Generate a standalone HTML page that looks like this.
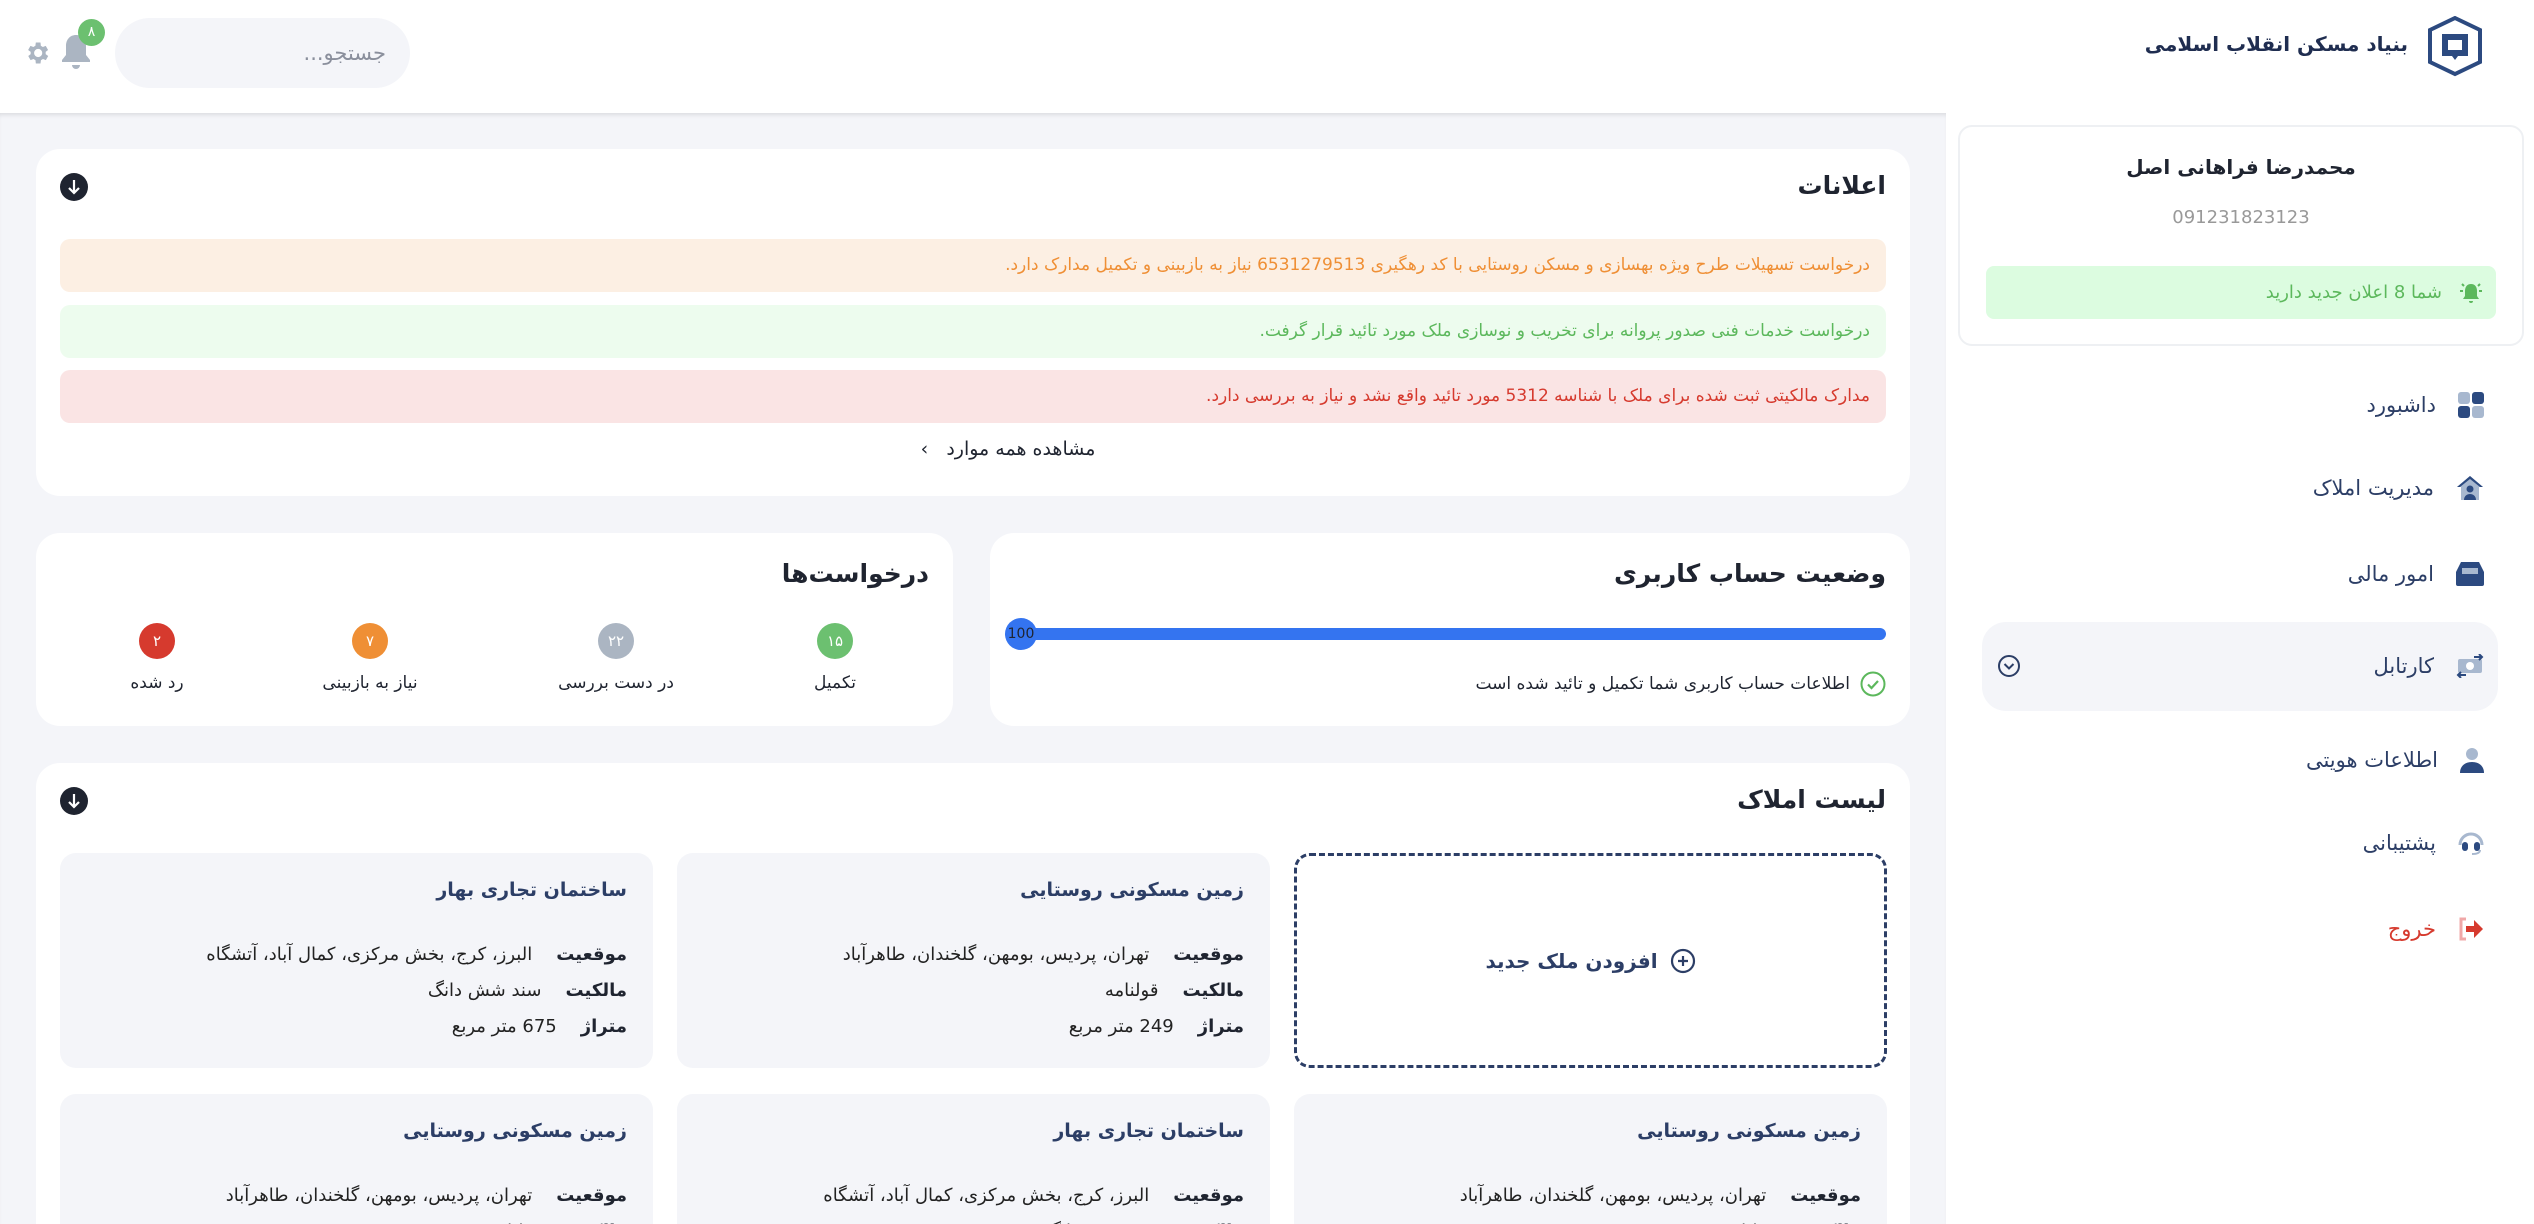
<!DOCTYPE html>
<html lang="fa" dir="rtl"><head><meta charset="utf-8">
<style>
*{box-sizing:border-box;margin:0;padding:0}
html,body{width:2534px;height:1224px;overflow:hidden}
body{background:#fff;font-family:"DejaVu Sans","Liberation Sans",sans-serif;color:#1f2430}
#wrap{position:relative;width:2534px;height:1224px;overflow:hidden}
.abs{position:absolute}
#main{left:0;top:113px;width:1946px;height:1111px;background:#f4f5f9;box-shadow:inset 0 4px 4px -2px rgba(0,0,0,.1)}
.card{position:absolute;background:#fff;border-radius:24px}
.h{position:absolute;right:24px;font-weight:bold;font-size:25px;color:#1f2430}
.alert{position:absolute;left:24px;right:24px;height:53px;border-radius:10px;font-size:17px;line-height:53px;padding-right:16px}
.menu{position:absolute;right:50px;width:480px;height:40px;display:flex;align-items:center;font-size:21px;color:#2c3e66}
.menu svg{margin-left:22px}
.pc{position:absolute;width:593px;height:215px;background:#f4f5f9;border-radius:16px;padding:26px 26px 0 0;overflow:hidden}
.pc .t{font-weight:bold;font-size:19px;color:#2c3e66;height:58px}
.row{display:flex;gap:24px;font-size:18px;line-height:36px;color:#222}
.row b{color:#1f2430}
.st{position:absolute;top:90px;width:200px;text-align:center;font-size:17px}
.st i{display:block;margin:0 auto 14px;width:36px;height:36px;border-radius:50%;color:#fff;font-style:normal;font-size:15px;line-height:36px}
</style></head><body><div id="wrap">
<div id="main" class="abs"></div>

<div class="abs" style="left:115px;top:18px;width:295px;height:70px;border-radius:35px;background:#f4f5f9;font-size:21px;color:#8a8f9c;line-height:70px;padding-right:24px">جستجو...</div>
<svg class="abs" style="left:60px;top:33px" width="32" height="38" viewBox="0 0 32 38"><path d="M16 2c-6 0-10 4.5-10 11v9l-4 5v2h28v-2l-4-5v-9c0-6.5-4-11-10-11z" fill="#abb5c2"/><path d="M12 32h8a4 4 0 0 1-8 0z" fill="#abb5c2"/></svg>
<div class="abs" style="left:78px;top:19px;width:27px;height:27px;border-radius:50%;background:#6cc070;color:#fff;font-size:14px;text-align:center;line-height:27px">٨</div>
<svg class="abs" style="left:23px;top:37px" width="28" height="32" viewBox="0 0 24 24"><path fill="#abb5c2" d="M19.4 13a7.5 7.5 0 0 0 0-2l2.1-1.6-2-3.5-2.5 1a7 7 0 0 0-1.7-1L15 3h-4l-.4 2.9a7 7 0 0 0-1.7 1l-2.5-1-2 3.5L6.6 11a7.5 7.5 0 0 0 0 2l-2.1 1.6 2 3.5 2.5-1a7 7 0 0 0 1.7 1L11 21h4l.4-2.9a7 7 0 0 0 1.7-1l2.5 1 2-3.5zM13 15.5a3.5 3.5 0 1 1 0-7 3.5 3.5 0 0 1 0 7z"/></svg>

<svg class="abs" style="left:2426px;top:16px" width="58" height="62" viewBox="0 0 58 62"><path d="M29 2 54 14v32L29 58 4 46V14z" fill="none" stroke="#2c4a80" stroke-width="4"/><path d="M16 18h26v22H32l-3 4-3-4H16z" fill="#2c4a80"/><path d="M22 24h14v10h-14z" fill="#fff"/></svg>
<div class="abs" style="right:126px;top:32px;font-size:20px;font-weight:bold;color:#1f2d50">بنیاد مسکن انقلاب اسلامی</div>

<div class="abs" style="left:1958px;top:125px;width:566px;height:221px;border:2px solid #eef0f3;border-radius:14px">
 <div style="text-align:center;margin-top:28px;font-weight:bold;font-size:20px">محمدرضا فراهانی اصل</div>
 <div style="text-align:center;margin-top:28px;font-size:18px;color:#999">091231823123</div>
 <div style="position:absolute;left:26px;right:26px;top:139px;height:53px;border-radius:8px;background:#dcfce0;color:#5cb85c;font-size:18px;line-height:53px;padding-right:54px">شما 8 اعلان جدید دارید
  <svg style="position:absolute;right:12px;top:14px" width="26" height="26" viewBox="0 0 26 26"><path d="M13 4c-4 0-6 3-6 7v5l-2 3h16l-2-3v-5c0-4-2-7-6-7z M11 21h4a2 2 0 0 1-4 0z" fill="#5cb85c"/><path d="M2 11h3M21 11h3M4 4l2 2M22 4l-2 2" stroke="#5cb85c" stroke-width="2"/></svg></div>
</div>

<div class="menu" style="top:385px"><svg width="26" height="26" viewBox="0 0 26 26"><rect x="14" y="0" width="12" height="12" rx="3" fill="#2c4a80"/><rect x="0" y="0" width="12" height="12" rx="3" fill="#a8b8cf"/><rect x="14" y="14" width="12" height="12" rx="3" fill="#a8b8cf"/><rect x="0" y="14" width="12" height="12" rx="3" fill="#2c4a80"/></svg>داشبورد</div>
<div class="menu" style="top:468px"><svg width="28" height="26" viewBox="0 0 28 26"><path d="M14 1 1 12h4v13h18V12h4z" fill="#a8b8cf"/><path d="M14 1 1 12h3L14 4l10 8h3z" fill="#2c4a80"/><circle cx="14" cy="14" r="3.5" fill="#2c4a80"/><path d="M8 25c0-4 3-6 6-6s6 2 6 6z" fill="#2c4a80"/></svg>مدیریت املاک</div>
<div class="menu" style="top:554px"><svg width="28" height="24" viewBox="0 0 28 24"><path d="M5 0h18l5 10v12a2 2 0 0 1-2 2H2a2 2 0 0 1-2-2V10z" fill="#2c4a80"/><rect x="6" y="6" width="16" height="6" fill="#a8b8cf"/></svg>امور مالی</div>
<div class="abs" style="left:1982px;top:622px;width:516px;height:89px;background:#f4f5f9;border-radius:24px"></div>
<div class="menu" style="top:646px"><svg width="28" height="24" viewBox="0 0 28 24"><rect x="2" y="5" width="24" height="14" rx="2" fill="#a8b8cf"/><circle cx="14" cy="12" r="4" fill="#fff"/><path d="M18 3h8M23 0l3 3-3 3M10 21H2M5 18l-3 3 3 3" stroke="#2c4a80" stroke-width="2" fill="none"/></svg>کارتابل</div>
<svg class="abs" style="left:1997px;top:654px" width="24" height="24" viewBox="0 0 24 24"><circle cx="12" cy="12" r="10" fill="none" stroke="#2c3e66" stroke-width="2"/><path d="M7.5 10l4.5 4.5 4.5-4.5" fill="none" stroke="#2c3e66" stroke-width="2"/></svg>
<div class="menu" style="top:740px"><svg width="24" height="26" viewBox="0 0 24 26"><circle cx="12" cy="7" r="6" fill="#a8b8cf"/><path d="M0 26c0-7 5-11 12-11s12 4 12 11z" fill="#2c4a80"/></svg>اطلاعات هویتی</div>
<div class="menu" style="top:823px"><svg width="26" height="24" viewBox="0 0 26 24"><path d="M2 14a11 11 0 0 1 22 0" fill="none" stroke="#a8b8cf" stroke-width="3"/><rect x="4" y="11" width="6" height="9" rx="3" fill="#2c4a80"/><rect x="16" y="11" width="6" height="9" rx="3" fill="#2c4a80"/><path d="M22 19c0 3-3 4-8 4" fill="none" stroke="#a8b8cf" stroke-width="2"/></svg>پشتیبانی</div>
<div class="menu" style="top:909px;color:#d63a2e"><svg width="26" height="24" viewBox="0 0 26 24"><path d="M8 2H3v20h5" fill="none" stroke="#f0a8a8" stroke-width="3"/><path d="M8 9h8V3l9 9-9 9v-6H8z" fill="#d63a2e"/></svg>خروج</div>

<div class="card" style="left:36px;top:149px;width:1874px;height:347px">
 <div class="h" style="top:22px">اعلانات</div>
 <svg class="abs" style="left:24px;top:24px" width="28" height="28" viewBox="0 0 28 28"><circle cx="14" cy="14" r="14" fill="#1f2430"/><path d="M14 7v13M9 15l5 5 5-5" stroke="#fff" stroke-width="2.2" fill="none"/></svg>
 <div class="alert" style="top:90px;background:#fcefe3;color:#ef8f35">درخواست تسهیلات طرح ویژه بهسازی و مسکن روستایی با کد رهگیری 6531279513 نیاز به بازبینی و تکمیل مدارک دارد.</div>
 <div class="alert" style="top:156px;background:#edfcee;color:#5cb85c">درخواست خدمات فنی صدور پروانه برای تخریب و نوسازی ملک مورد تائید قرار گرفت.</div>
 <div class="alert" style="top:221px;background:#fae4e4;color:#d63a2e">مدارک مالکیتی ثبت شده برای ملک با شناسه 5312 مورد تائید واقع نشد و نیاز به بررسی دارد.</div>
 <div class="abs" style="left:0;right:0;top:289px;text-align:center;font-size:19px;padding-left:70px">مشاهده همه موارد &nbsp;&nbsp;›</div>
</div>

<div class="card" style="left:990px;top:533px;width:920px;height:193px">
 <div class="h" style="top:26px">وضعیت حساب کاربری</div>
 <div class="abs" style="left:20px;right:24px;top:95px;height:12px;border-radius:6px;background:#3474f0"></div>
 <div class="abs" style="left:15px;top:85px;width:32px;height:32px;border-radius:50%;background:#3474f0;font-size:14px;line-height:32px;text-align:center;color:#1f2430">100</div>
 <div class="abs" style="right:24px;top:138px;font-size:17px;display:flex;align-items:center;gap:10px"><svg width="26" height="26" viewBox="0 0 26 26"><circle cx="13" cy="13" r="11.5" fill="none" stroke="#5cb85c" stroke-width="2"/><path d="M8 13.5l3.5 3.5 6.5-7" fill="none" stroke="#5cb85c" stroke-width="2.2"/></svg>اطلاعات حساب کاربری شما تکمیل و تائید شده است</div>
</div>

<div class="card" style="left:36px;top:533px;width:917px;height:193px">
 <div class="h" style="top:26px">درخواست‌ها</div>
 <div class="st" style="left:699px"><i style="background:#6cc070">١۵</i>تکمیل</div>
 <div class="st" style="left:480px"><i style="background:#abb5c2">٢٢</i>در دست بررسی</div>
 <div class="st" style="left:234px"><i style="background:#ef8f35">٧</i>نیاز به بازبینی</div>
 <div class="st" style="left:21px"><i style="background:#d63a2e">٢</i>رد شده</div>
</div>

<div class="card" style="left:36px;top:763px;width:1874px;height:461px;border-radius:24px 24px 0 0">
 <div class="h" style="top:22px">لیست املاک</div>
 <svg class="abs" style="left:24px;top:24px" width="28" height="28" viewBox="0 0 28 28"><circle cx="14" cy="14" r="14" fill="#1f2430"/><path d="M14 7v13M9 15l5 5 5-5" stroke="#fff" stroke-width="2.2" fill="none"/></svg>
</div>
<div class="abs" style="left:1294px;top:853px;width:593px;height:215px;border:3px dashed #2c3e66;border-radius:16px;display:flex;align-items:center;justify-content:center;gap:12px;font-weight:bold;font-size:20px;color:#2c3e66"><svg width="26" height="26" viewBox="0 0 26 26"><circle cx="13" cy="13" r="11" fill="none" stroke="#2c3e66" stroke-width="2.2"/><path d="M13 8v10M8 13h10" stroke="#2c3e66" stroke-width="2.2"/></svg>افزودن ملک جدید</div>

<div class="pc" style="left:677px;top:853px"><div class="t">زمین مسکونی روستایی</div>
 <div class="row"><b>موقعیت</b><span>تهران، پردیس، بومهن، گلخندان، طاهرآباد</span></div>
 <div class="row"><b>مالکیت</b><span>قولنامه</span></div>
 <div class="row"><b>متراژ</b><span>249 متر مربع</span></div></div>
<div class="pc" style="left:60px;top:853px"><div class="t">ساختمان تجاری بهار</div>
 <div class="row"><b>موقعیت</b><span>البرز، کرج، بخش مرکزی، کمال آباد، آتشگاه</span></div>
 <div class="row"><b>مالکیت</b><span>سند شش دانگ</span></div>
 <div class="row"><b>متراژ</b><span>675 متر مربع</span></div></div>
<div class="pc" style="left:1294px;top:1094px;height:130px;border-radius:16px 16px 0 0"><div class="t">زمین مسکونی روستایی</div>
 <div class="row"><b>موقعیت</b><span>تهران، پردیس، بومهن، گلخندان، طاهرآباد</span></div>
 <div class="row"><b>مالکیت</b><span>قولنامه</span></div></div>
<div class="pc" style="left:677px;top:1094px;height:130px;border-radius:16px 16px 0 0"><div class="t">ساختمان تجاری بهار</div>
 <div class="row"><b>موقعیت</b><span>البرز، کرج، بخش مرکزی، کمال آباد، آتشگاه</span></div>
 <div class="row"><b>مالکیت</b><span>سند شش دانگ</span></div></div>
<div class="pc" style="left:60px;top:1094px;height:130px;border-radius:16px 16px 0 0"><div class="t">زمین مسکونی روستایی</div>
 <div class="row"><b>موقعیت</b><span>تهران، پردیس، بومهن، گلخندان، طاهرآباد</span></div>
 <div class="row"><b>مالکیت</b><span>قولنامه</span></div></div>
</div></body></html>
